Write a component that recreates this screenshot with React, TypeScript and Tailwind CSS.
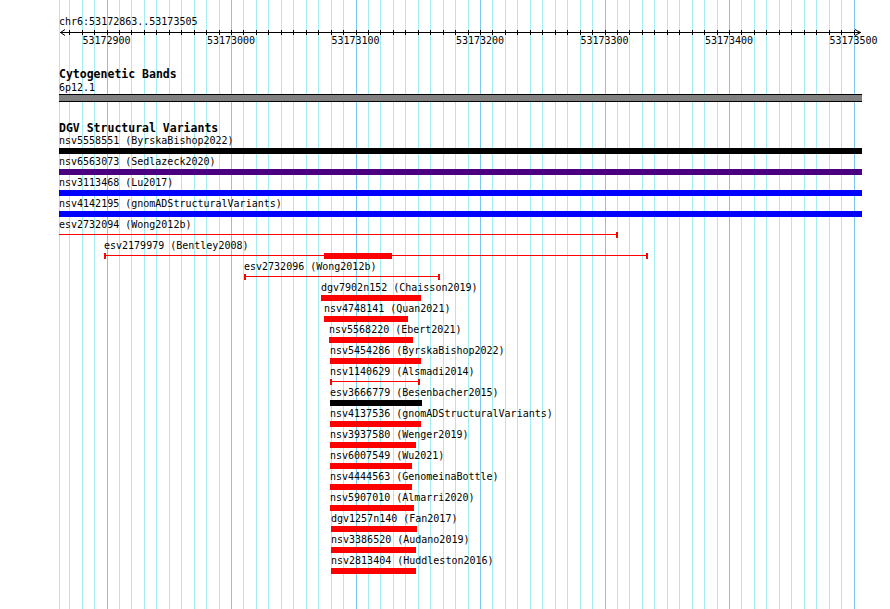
import React from "react"

// track area in page pixels: 59 .. 862
const ORIGIN = 59
const MAJOR0 = 106.5
const STEP = 12.45

type Feature = {
  label: string
  s: number
  e: number
  kind?: "bar" | "line"
  color?: string
  capL?: boolean
  thick?: [number, number]
}

const features: Feature[] = [
  { label: "nsv5558551 (ByrskaBishop2022)", s: 59, e: 862, color: "bg-black" },
  { label: "nsv6563073 (Sedlazeck2020)", s: 59, e: 862, color: "bg-[#4b0082]" },
  { label: "nsv3113468 (Lu2017)", s: 59, e: 862, color: "bg-[#0000ff]" },
  { label: "nsv4142195 (gnomADStructuralVariants)", s: 59, e: 862, color: "bg-[#0000ff]" },
  { label: "esv2732094 (Wong2012b)", s: 59, e: 618, kind: "line", capL: false },
  { label: "esv2179979 (Bentley2008)", s: 104, e: 648, kind: "line", thick: [324, 392] },
  { label: "esv2732096 (Wong2012b)", s: 244, e: 440, kind: "line" },
  { label: "dgv7902n152 (Chaisson2019)", s: 321, e: 421 },
  { label: "nsv4748141 (Quan2021)", s: 324, e: 408 },
  { label: "nsv5568220 (Ebert2021)", s: 329, e: 413 },
  { label: "nsv5454286 (ByrskaBishop2022)", s: 330, e: 421 },
  { label: "nsv1140629 (Alsmadi2014)", s: 330, e: 420, kind: "line" },
  { label: "esv3666779 (Besenbacher2015)", s: 330, e: 422, color: "bg-black" },
  { label: "nsv4137536 (gnomADStructuralVariants)", s: 330, e: 421 },
  { label: "nsv3937580 (Wenger2019)", s: 330, e: 416 },
  { label: "nsv6007549 (Wu2021)", s: 330, e: 412 },
  { label: "nsv4444563 (GenomeinaBottle)", s: 330, e: 412 },
  { label: "nsv5907010 (Almarri2020)", s: 330, e: 414 },
  { label: "dgv1257n140 (Fan2017)", s: 331, e: 417 },
  { label: "nsv3386520 (Audano2019)", s: 331, e: 416 },
  { label: "nsv2813404 (Huddleston2016)", s: 331, e: 416 },
]

const minorTicks = Array.from({ length: 64 }, (_, i) => i - 3)

function GridLines() {
  return (
    <svg className="absolute inset-0 pointer-events-none" width={890} height={609} shapeRendering="crispEdges">
      <rect x={59} y={0} width={1} height={609} fill="#a4eef2" />
      {minorTicks.map((k) => (
        <rect
          key={k}
          x={Math.round(MAJOR0 + k * STEP)}
          y={0}
          width={1}
          height={609}
          fill={k % 10 === 0 ? "#7cc8ee" : "#a4eef2"}
        />
      ))}
    </svg>
  )
}

function Ruler() {
  return (
    <svg width={830} height={20} className="block overflow-visible" shapeRendering="crispEdges">
      <rect x={1} y={4} width={801} height={1} fill="#000" />
      <polyline points="6,1.5 1.5,4.5 6,7.5" fill="none" stroke="#000" strokeWidth={1} shapeRendering="auto" />
      <polyline points="796,1.5 801.5,4.5 796,7.5" fill="none" stroke="#000" strokeWidth={1} shapeRendering="auto" />
      {minorTicks.map((k) => (
        <rect key={k} x={Math.round(MAJOR0 + k * STEP) - ORIGIN} y={2} width={1} height={5} fill="#000" />
      ))}
      {[0, 1, 2, 3, 4, 5, 6].map((n) => (
        <text
          key={n}
          x={MAJOR0 + n * 124.5 - ORIGIN}
          y={16}
          textAnchor="middle"
          fill="#000"
          shapeRendering="auto"
        >
          {53172900 + n * 100}
        </text>
      ))}
    </svg>
  )
}

function Glyph({ f }: { f: Feature }) {
  const left = f.s - ORIGIN
  const width = f.e - f.s
  if (f.kind !== "line") {
    return <div className={`h-[6px] ${f.color ?? "bg-[#ff0000]"}`} style={{ marginLeft: left, width }} />
  }
  const capL = f.capL !== false
  return (
    <div className="h-[6px] flex items-start" style={{ marginLeft: left, width }}>
      {capL && <div className="w-[2px] h-[6px] bg-[#ff0000] shrink-0" />}
      {f.thick ? (
        <>
          <div className="h-px mt-[2px] bg-[#ff0000] shrink-0" style={{ width: f.thick[0] - f.s - (capL ? 2 : 0) }} />
          <div className="h-[6px] bg-[#ff0000] shrink-0" style={{ width: f.thick[1] - f.thick[0] }} />
          <div className="h-px mt-[2px] bg-[#ff0000] flex-1" />
        </>
      ) : (
        <div className="h-px mt-[2px] bg-[#ff0000] flex-1" />
      )}
      <div className="w-[2px] h-[6px] bg-[#ff0000] shrink-0" />
    </div>
  )
}

export default function App() {
  return (
    <div className="relative w-[890px] h-[609px] overflow-hidden bg-white text-black font-['DejaVu_Sans_Mono',monospace] text-[10px]">
      <GridLines />

      <div className="relative pl-[59px] pt-[15px]">
        {/* location + ruler */}
        <div className="h-[13px] leading-[13px] whitespace-nowrap">chr6:53172863..53173505</div>
        <Ruler />

        {/* Cytogenetic Bands */}
        <div className="mt-[19px] h-[14px] leading-[14px] font-bold text-[11.5px] whitespace-nowrap">Cytogenetic Bands</div>
        <div className="h-[13px] leading-[13px]">6p12.1</div>
        <div className="w-[803px] h-[8px] border-y border-black bg-[#808080]" />

        {/* DGV Structural Variants */}
        <div className="mt-[19px] h-[14px] leading-[15px] font-bold text-[11.5px] whitespace-nowrap">DGV Structural Variants</div>
        <div className="w-[803px]">
          {features.map((f) => (
            <div key={f.label} className="h-[21px]">
              <div className="h-[13px] leading-[11px] whitespace-nowrap" style={{ marginLeft: f.s - ORIGIN }}>
                {f.label}
              </div>
              <Glyph f={f} />
            </div>
          ))}
        </div>
      </div>
    </div>
  )
}
